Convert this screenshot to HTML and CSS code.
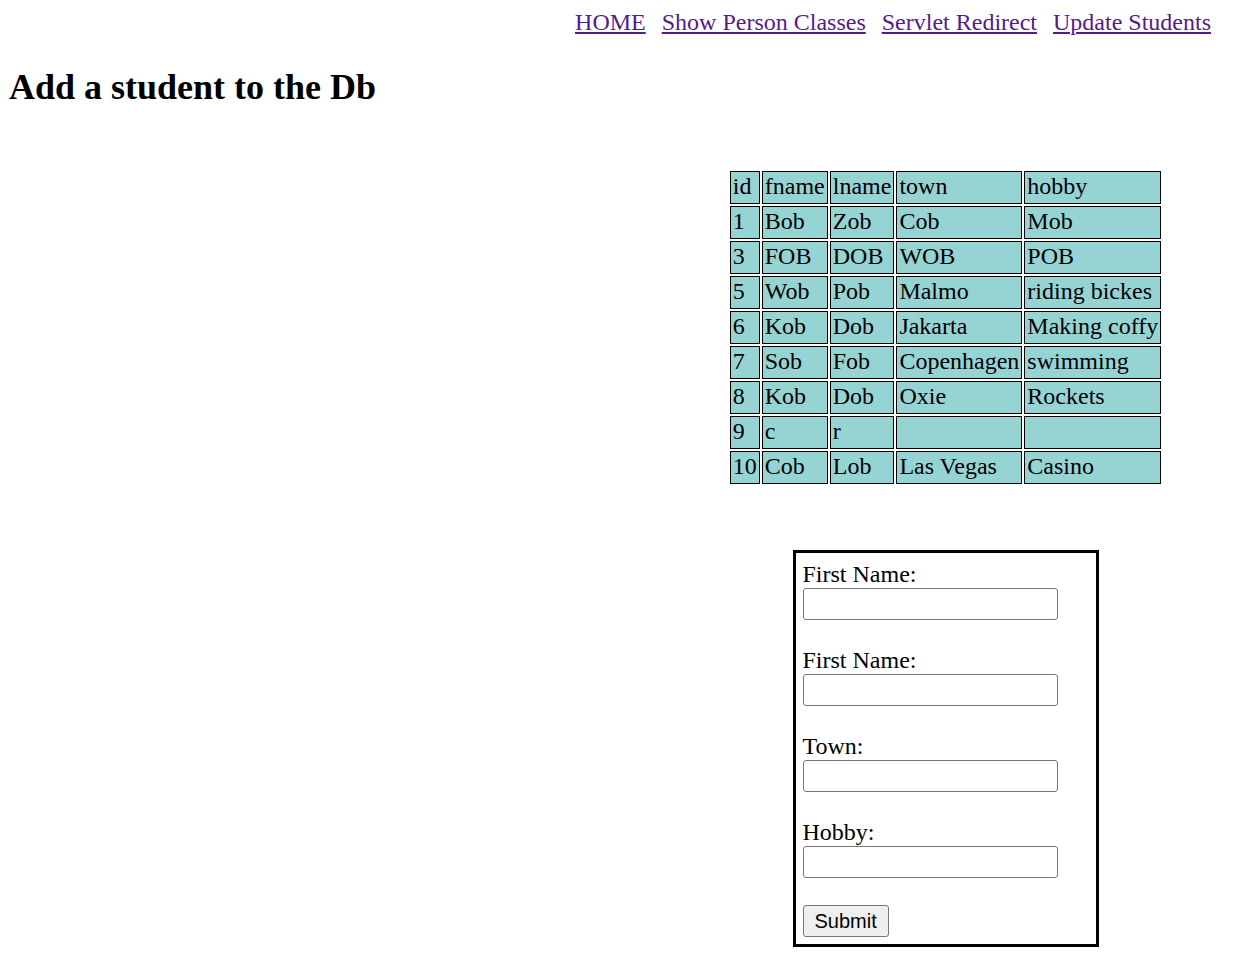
FILE: index.html
```html
<!DOCTYPE html>
<html>
<head>
<meta charset="utf-8">
<title>Add a student</title>
<link rel="stylesheet" href="styles.css">
</head>
<body>
<nav class="nav">
  <a href="#">HOME</a>
  <a href="#">Show Person Classes</a>
  <a href="#">Servlet Redirect</a>
  <a href="#">Update Students</a>
</nav>
<h2 class="title">Add a student to the Db</h2>
<div class="content">
  <div class="right">
    <table class="students">
      <tr><td>id</td><td>fname</td><td>lname</td><td>town</td><td>hobby</td></tr>
      <tr><td>1</td><td>Bob</td><td>Zob</td><td>Cob</td><td>Mob</td></tr>
      <tr><td>3</td><td>FOB</td><td>DOB</td><td>WOB</td><td>POB</td></tr>
      <tr><td>5</td><td>Wob</td><td>Pob</td><td>Malmo</td><td>riding bickes</td></tr>
      <tr><td>6</td><td>Kob</td><td>Dob</td><td>Jakarta</td><td>Making coffy</td></tr>
      <tr><td>7</td><td>Sob</td><td>Fob</td><td>Copenhagen</td><td>swimming</td></tr>
      <tr><td>8</td><td>Kob</td><td>Dob</td><td>Oxie</td><td>Rockets</td></tr>
      <tr><td>9</td><td>c</td><td>r</td><td></td><td></td></tr>
      <tr><td>10</td><td>Cob</td><td>Lob</td><td>Las Vegas</td><td>Casino</td></tr>
    </table>
    <form class="addform">
      <div class="field">
        <label class="label">First Name:</label>
        <input class="input" type="text">
      </div>
      <div class="field">
        <label class="label">First Name:</label>
        <input class="input" type="text">
      </div>
      <div class="field">
        <label class="label">Town:</label>
        <input class="input" type="text">
      </div>
      <div class="field">
        <label class="label">Hobby:</label>
        <input class="input" type="text">
      </div>
      <button class="submit" type="button">Submit</button>
    </form>
  </div>
</div>
</body>
</html>
```
FILE: styles.css
```css
html, body {
  background: #ffffff;
}
body {
  margin: 8px;
  font-family: "Liberation Serif", "Times New Roman", serif;
  font-size: 24px;
  color: #000000;
}
.nav {
  display: flex;
  justify-content: flex-end;
  gap: 16px;
  padding-right: 32px;
  line-height: 28px;
}
.nav a {
  color: #551a8b;
  text-decoration: underline;
}
.title {
  font-size: 36px;
  font-weight: bold;
  margin: 31px 0 0 1px;
  line-height: 41px;
}
.content {
  display: flex;
  justify-content: flex-end;
  margin-top: 61px;
}
.right {
  width: 595px;
  display: flex;
  flex-direction: column;
  align-items: center;
}
.students {
  border-collapse: separate;
  border-spacing: 2px;
}
.students td {
  background: #96d4d4;
  border: 1px solid #000000;
  padding: 0 2px 3px 2px;
  height: 28px;
  line-height: 28px;
  white-space: nowrap;
}
.addform {
  margin-top: 64px;
  border: 3px solid #000000;
  padding: 7px 7px 7px 7px;
  width: 286px;
  display: flex;
  flex-direction: column;
  align-items: flex-start;
}
.field {
  display: flex;
  flex-direction: column;
  align-items: flex-start;
  margin-bottom: 26px;
}
.field:nth-child(4) {
  margin-bottom: 27px;
}
.label {
  line-height: 28px;
  height: 28px;
}
.input {
  box-sizing: border-box;
  width: 255px;
  height: 32px;
  margin: 0;
  border: 1px solid #767676;
  border-radius: 3px;
  padding: 1px 3px;
  background: #ffffff;
  font-family: "Liberation Sans", Arial, sans-serif;
  font-size: 20px;
}
.submit {
  box-sizing: border-box;
  height: 32px;
  margin: 0;
  padding: 0 11px;
  border: 1px solid #767676;
  border-radius: 3px;
  background: #efefef;
  font-family: "Liberation Sans", Arial, sans-serif;
  font-size: 20px;
  color: #000000;
}
```
